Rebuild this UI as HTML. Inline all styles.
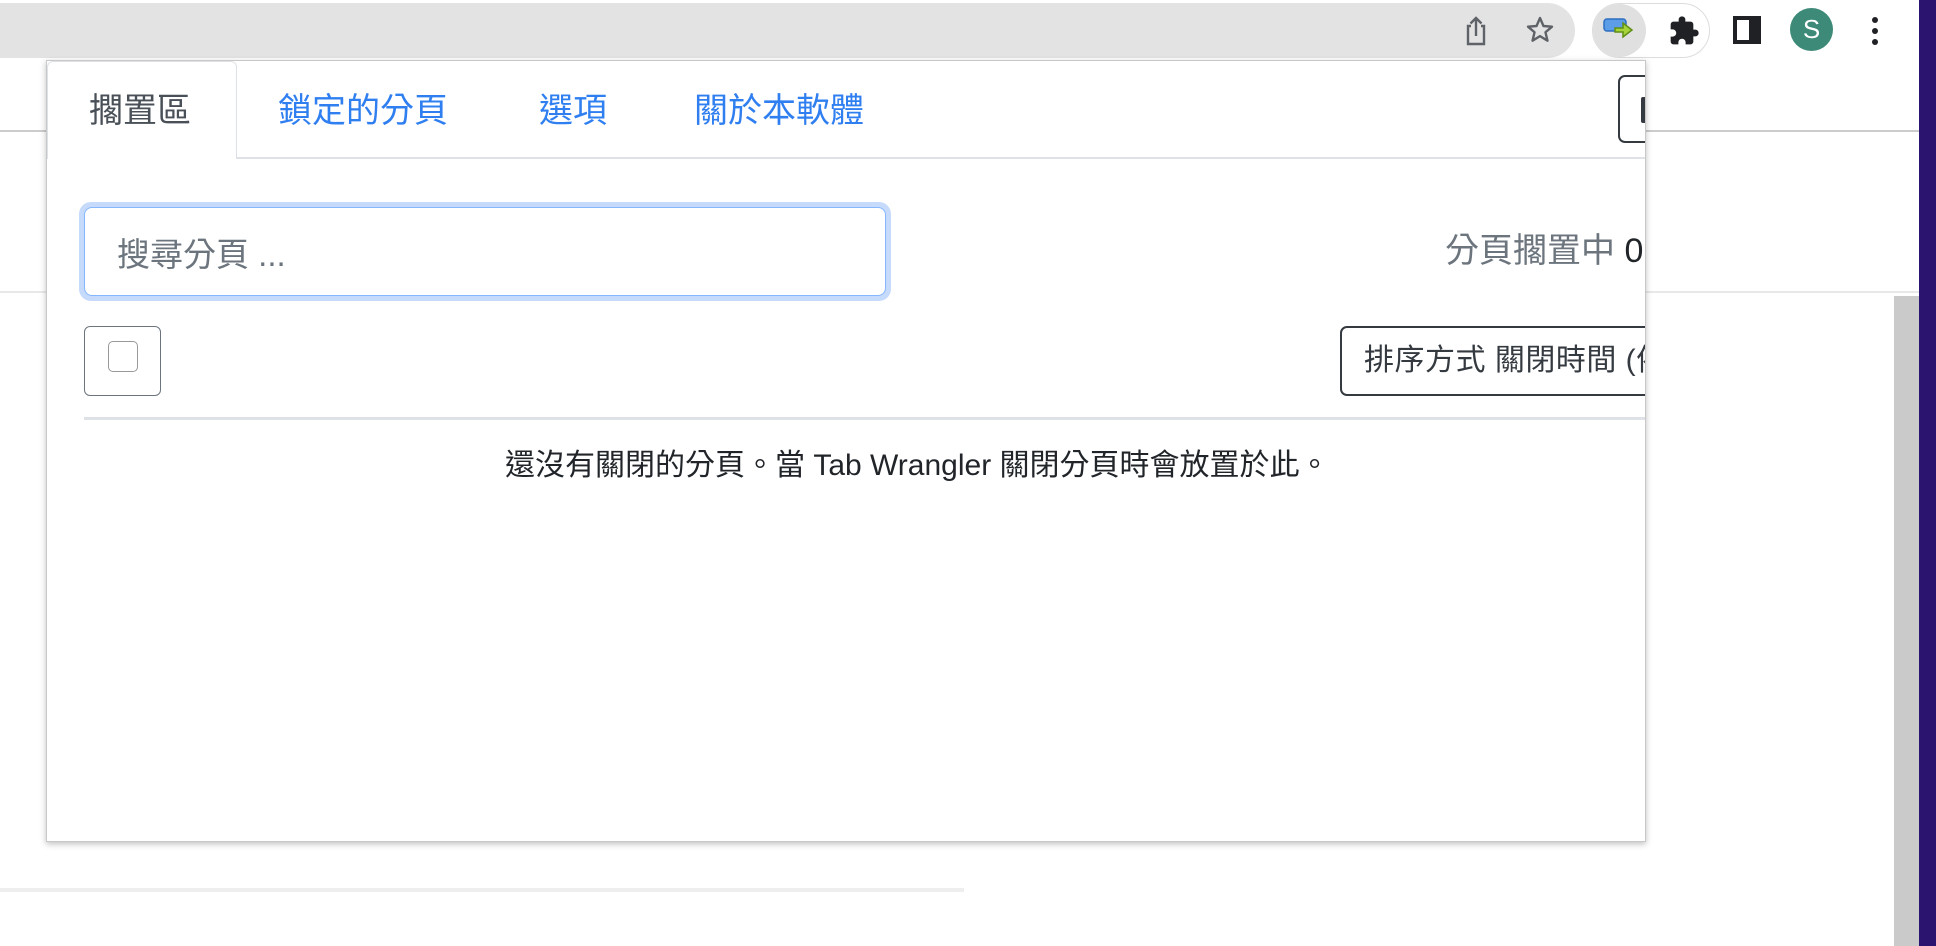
<!DOCTYPE html>
<html><head><meta charset="utf-8"><style>
*{margin:0;padding:0;box-sizing:border-box}
body{width:1936px;height:946px;overflow:hidden;background:#fff;position:relative;font-family:"Liberation Sans","Noto Sans CJK TC",sans-serif}
.a{position:absolute}
</style></head><body>
<div class="a" style="left:0;top:0;width:1919px;height:60px;background:#fff"></div>
<div class="a" style="left:-40px;top:3px;width:1615px;height:55px;background:#e3e3e3;border-radius:28px"></div>
<svg class="a" style="left:1460px;top:14px" width="32" height="34" viewBox="0 0 32 34"><path d="M11 12H8v18h16V12h-3M16 22V4M10.5 9.5L16 4l5.5 5.5" fill="none" stroke="#5f6368" stroke-width="2.4"/></svg>
<svg class="a" style="left:1524px;top:14px" width="32" height="32" viewBox="0 0 24 24"><path d="M12 3l2.6 6 6.4.5-4.9 4.2 1.5 6.3L12 16.6 6.4 20l1.5-6.3L3 9.5 9.4 9z" fill="none" stroke="#5f6368" stroke-width="1.8" stroke-linejoin="round"/></svg>
<div class="a" style="left:1592px;top:3px;width:118px;height:55px;border:1.5px solid #ddd;border-radius:28px"></div>
<div class="a" style="left:1593px;top:4px;width:53px;height:53px;background:#e0e0e0;border-radius:50%"></div>
<svg class="a" style="left:1601px;top:16px" width="36" height="26" viewBox="0 0 36 26"><rect x="3" y="3" width="22" height="12" rx="3" fill="#5d9de8" stroke="#2d6fc0" stroke-width="1.5"/><path d="M14 12h8V7l9 7-9 7v-5h-8z" fill="#a6d33a" stroke="#5f8e15" stroke-width="1.5"/></svg>
<svg class="a" style="left:1668px;top:15px" width="32" height="32" viewBox="0 0 24 24"><path d="M20.5 11H19V7a2 2 0 0 0-2-2h-4V3.5a2.5 2.5 0 0 0-5 0V5H4a2 2 0 0 0-2 2v3.8h1.5a2.7 2.7 0 0 1 0 5.4H2V20a2 2 0 0 0 2 2h3.8v-1.5a2.7 2.7 0 0 1 5.4 0V22H17a2 2 0 0 0 2-2v-4h1.5a2.5 2.5 0 0 0 0-5z" fill="#202124"/></svg>
<div class="a" style="left:1733px;top:16px;width:28px;height:28px;border:4px solid #202124;border-right-width:12px"></div>
<div class="a" style="left:1790px;top:8px;width:43px;height:43px;background:#3d8a78;border-radius:50%;color:#fff;font-size:26px;line-height:43px;text-align:center">S</div>
<div class="a" style="left:1872px;top:17px;width:6px;height:6px;background:#202124;border-radius:50%"></div>
<div class="a" style="left:1872px;top:28px;width:6px;height:6px;background:#202124;border-radius:50%"></div>
<div class="a" style="left:1872px;top:39px;width:6px;height:6px;background:#202124;border-radius:50%"></div>
<div class="a" style="left:0;top:130px;width:1919px;height:2px;background:#ccc"></div>
<div class="a" style="left:0;top:291px;width:1919px;height:2px;background:#e8e8e8"></div>
<div class="a" style="left:1894px;top:296px;width:25px;height:650px;background:#cacaca"></div>
<div class="a" style="left:1919px;top:0;width:17px;height:946px;background:#2a1470"></div>
<div class="a" style="left:0;top:888px;width:964px;height:4px;background:#eee"></div>
<div class="a" style="left:46px;top:60px;width:1600px;height:782px;background:#fff;border:1px solid #c8c8c8;box-shadow:0 2px 6px rgba(0,0,0,.25);overflow:hidden">
 <div class="a" style="left:189px;top:96px;width:1500px;height:1.5px;background:#dee2e6"></div>
 <div class="a" style="left:0;top:0;width:190px;height:98px;border:1.5px solid #dee2e6;border-bottom:none;border-radius:6px 6px 0 0;background:#fff"></div>
 <div class="a" style="left:42px;top:28px;font-size:34px;color:#495057;line-height:44px">擱置區</div>
 <div class="a" style="left:231px;top:28px;font-size:34px;color:#2f7ff0;line-height:44px">鎖定的分頁</div>
 <div class="a" style="left:492px;top:28px;font-size:34px;color:#2f7ff0;line-height:44px">選項</div>
 <div class="a" style="left:647px;top:28px;font-size:34px;color:#2f7ff0;line-height:44px">關於本軟體</div>
 <div class="a" style="left:1571px;top:14px;width:60px;height:68px;border:2px solid #343a40;border-radius:7px"></div>
 <div class="a" style="left:1594px;top:36px;width:10px;height:26px;background:#343a40;border-radius:2px"></div>
 <div class="a" style="left:32px;top:141px;width:812px;height:99px;background:#c6dafc;border-radius:12px"></div>
 <div class="a" style="left:37px;top:146px;width:802px;height:89px;background:#fff;border:1.5px solid #86b7fe;border-radius:8px"></div>
 <div class="a" style="left:70px;top:172px;font-size:33px;color:#6c757d;line-height:44px">搜尋分頁 ...</div>
 <div class="a" style="left:1398px;top:168px;font-size:34px;color:#6c757d;line-height:44px;white-space:nowrap">分頁擱置中 <span style="color:#212529">0</span></div>
 <div class="a" style="left:37px;top:265px;width:77px;height:70px;border:1.5px solid #6c757d;border-radius:6px"></div>
 <div class="a" style="left:61px;top:280px;width:30px;height:31px;border:1.5px solid #999;border-radius:5px"></div>
 <div class="a" style="left:1293px;top:265px;width:400px;height:70px;border:2px solid #343a40;border-radius:7px"></div>
 <div class="a" style="left:1317px;top:281px;font-size:30px;color:#343a40;line-height:38px;white-space:nowrap;letter-spacing:0.5px">排序方式 關閉時間 (依</div>
 <div class="a" style="left:37px;top:356px;width:1600px;height:3px;background:#dee2e6"></div>
 <div class="a" style="left:458px;top:387px;font-size:30px;color:#212529;line-height:36px;white-space:nowrap">還沒有關閉的分頁。當 Tab Wrangler 關閉分頁時會放置於此。</div>
</div>
</body></html>
